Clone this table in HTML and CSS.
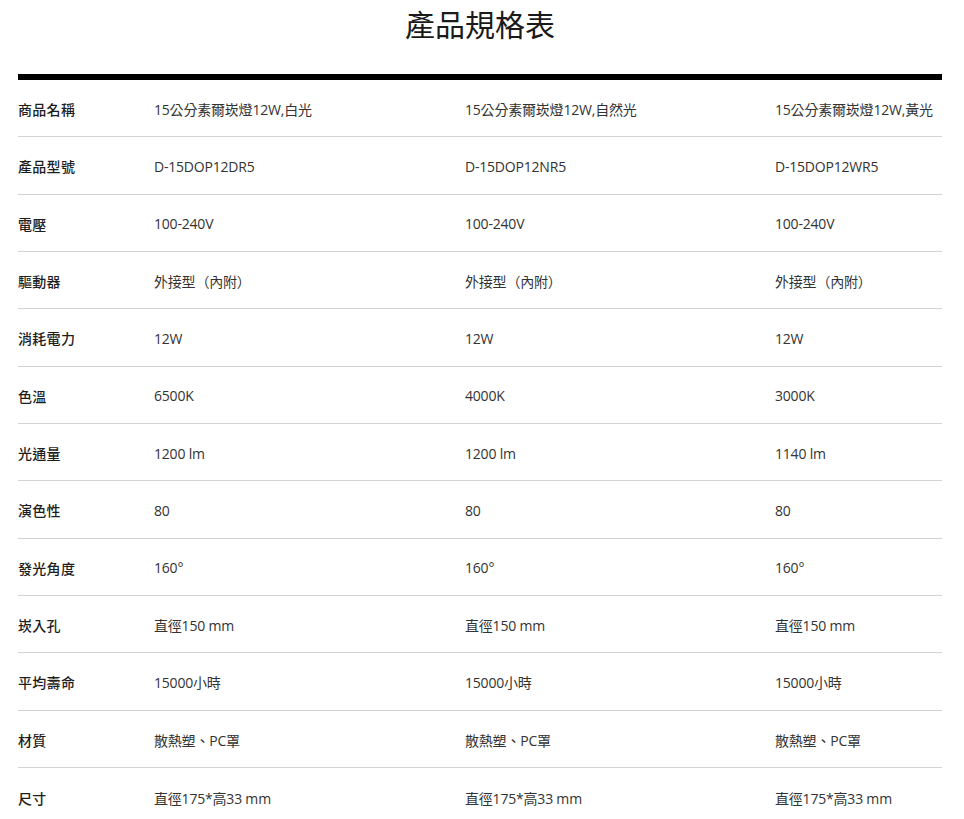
FILE: index.html
```html
<!DOCTYPE html>
<html lang="zh-Hant">
<head>
<meta charset="utf-8">
<title>產品規格表</title>
<link rel="stylesheet" href="styles.css">
</head>
<body>
<h1 class="title">產品規格表</h1>
<div class="spec">
  <div class="row"><div class="label">商品名稱</div><div class="cell">15公分素爾崁燈12W,白光</div><div class="cell">15公分素爾崁燈12W,自然光</div><div class="cell">15公分素爾崁燈12W,黃光</div></div>
  <div class="row"><div class="label">產品型號</div><div class="cell">D-15DOP12DR5</div><div class="cell">D-15DOP12NR5</div><div class="cell">D-15DOP12WR5</div></div>
  <div class="row"><div class="label">電壓</div><div class="cell">100-240V</div><div class="cell">100-240V</div><div class="cell">100-240V</div></div>
  <div class="row"><div class="label">驅動器</div><div class="cell">外接型（內附）</div><div class="cell">外接型（內附）</div><div class="cell">外接型（內附）</div></div>
  <div class="row"><div class="label">消耗電力</div><div class="cell">12W</div><div class="cell">12W</div><div class="cell">12W</div></div>
  <div class="row"><div class="label">色溫</div><div class="cell">6500K</div><div class="cell">4000K</div><div class="cell">3000K</div></div>
  <div class="row"><div class="label">光通量</div><div class="cell">1200 lm</div><div class="cell">1200 lm</div><div class="cell">1140 lm</div></div>
  <div class="row"><div class="label">演色性</div><div class="cell">80</div><div class="cell">80</div><div class="cell">80</div></div>
  <div class="row"><div class="label">發光角度</div><div class="cell">160°</div><div class="cell">160°</div><div class="cell">160°</div></div>
  <div class="row"><div class="label">崁入孔</div><div class="cell">直徑150 mm</div><div class="cell">直徑150 mm</div><div class="cell">直徑150 mm</div></div>
  <div class="row"><div class="label">平均壽命</div><div class="cell">15000小時</div><div class="cell">15000小時</div><div class="cell">15000小時</div></div>
  <div class="row"><div class="label">材質</div><div class="cell">散熱塑、PC罩</div><div class="cell">散熱塑、PC罩</div><div class="cell">散熱塑、PC罩</div></div>
  <div class="row last"><div class="label">尺寸</div><div class="cell">直徑175*高33 mm</div><div class="cell">直徑175*高33 mm</div><div class="cell">直徑175*高33 mm</div></div>
</div>
</body>
</html>
```
FILE: styles.css
```css
html, body {
  margin: 0;
  padding: 0;
  background: #ffffff;
}
body {
  padding: 0 22px 0 18px;
  font-family: "Open Sans", "Noto Sans CJK TC", sans-serif;
  color: #333333;
}
.title {
  margin: 0;
  height: 46px;
  font-family: "Noto Sans CJK TC", sans-serif;
  font-size: 30px;
  font-weight: 400;
  line-height: 46px;
  text-align: center;
  color: #1a1a1a;
}
.spec {
  margin-top: 28px;
  border-top: 6px solid #000000;
}
.row {
  display: grid;
  grid-template-columns: 136px 311px 310px 1fr;
  height: 57.33px;
  box-sizing: border-box;
  border-bottom: 1px solid #d2d2d2;
  align-items: center;
  font-size: 14px;
}
.row.last {
  border-bottom: none;
}
.label {
  font-family: "Noto Sans CJK TC", sans-serif;
  font-weight: 500;
  color: #1e1e1e;
  padding-top: 2px;
  letter-spacing: 0.3px;
}
.cell {
  padding-top: 2px;
  white-space: nowrap;
  letter-spacing: -0.2px;
}
```
